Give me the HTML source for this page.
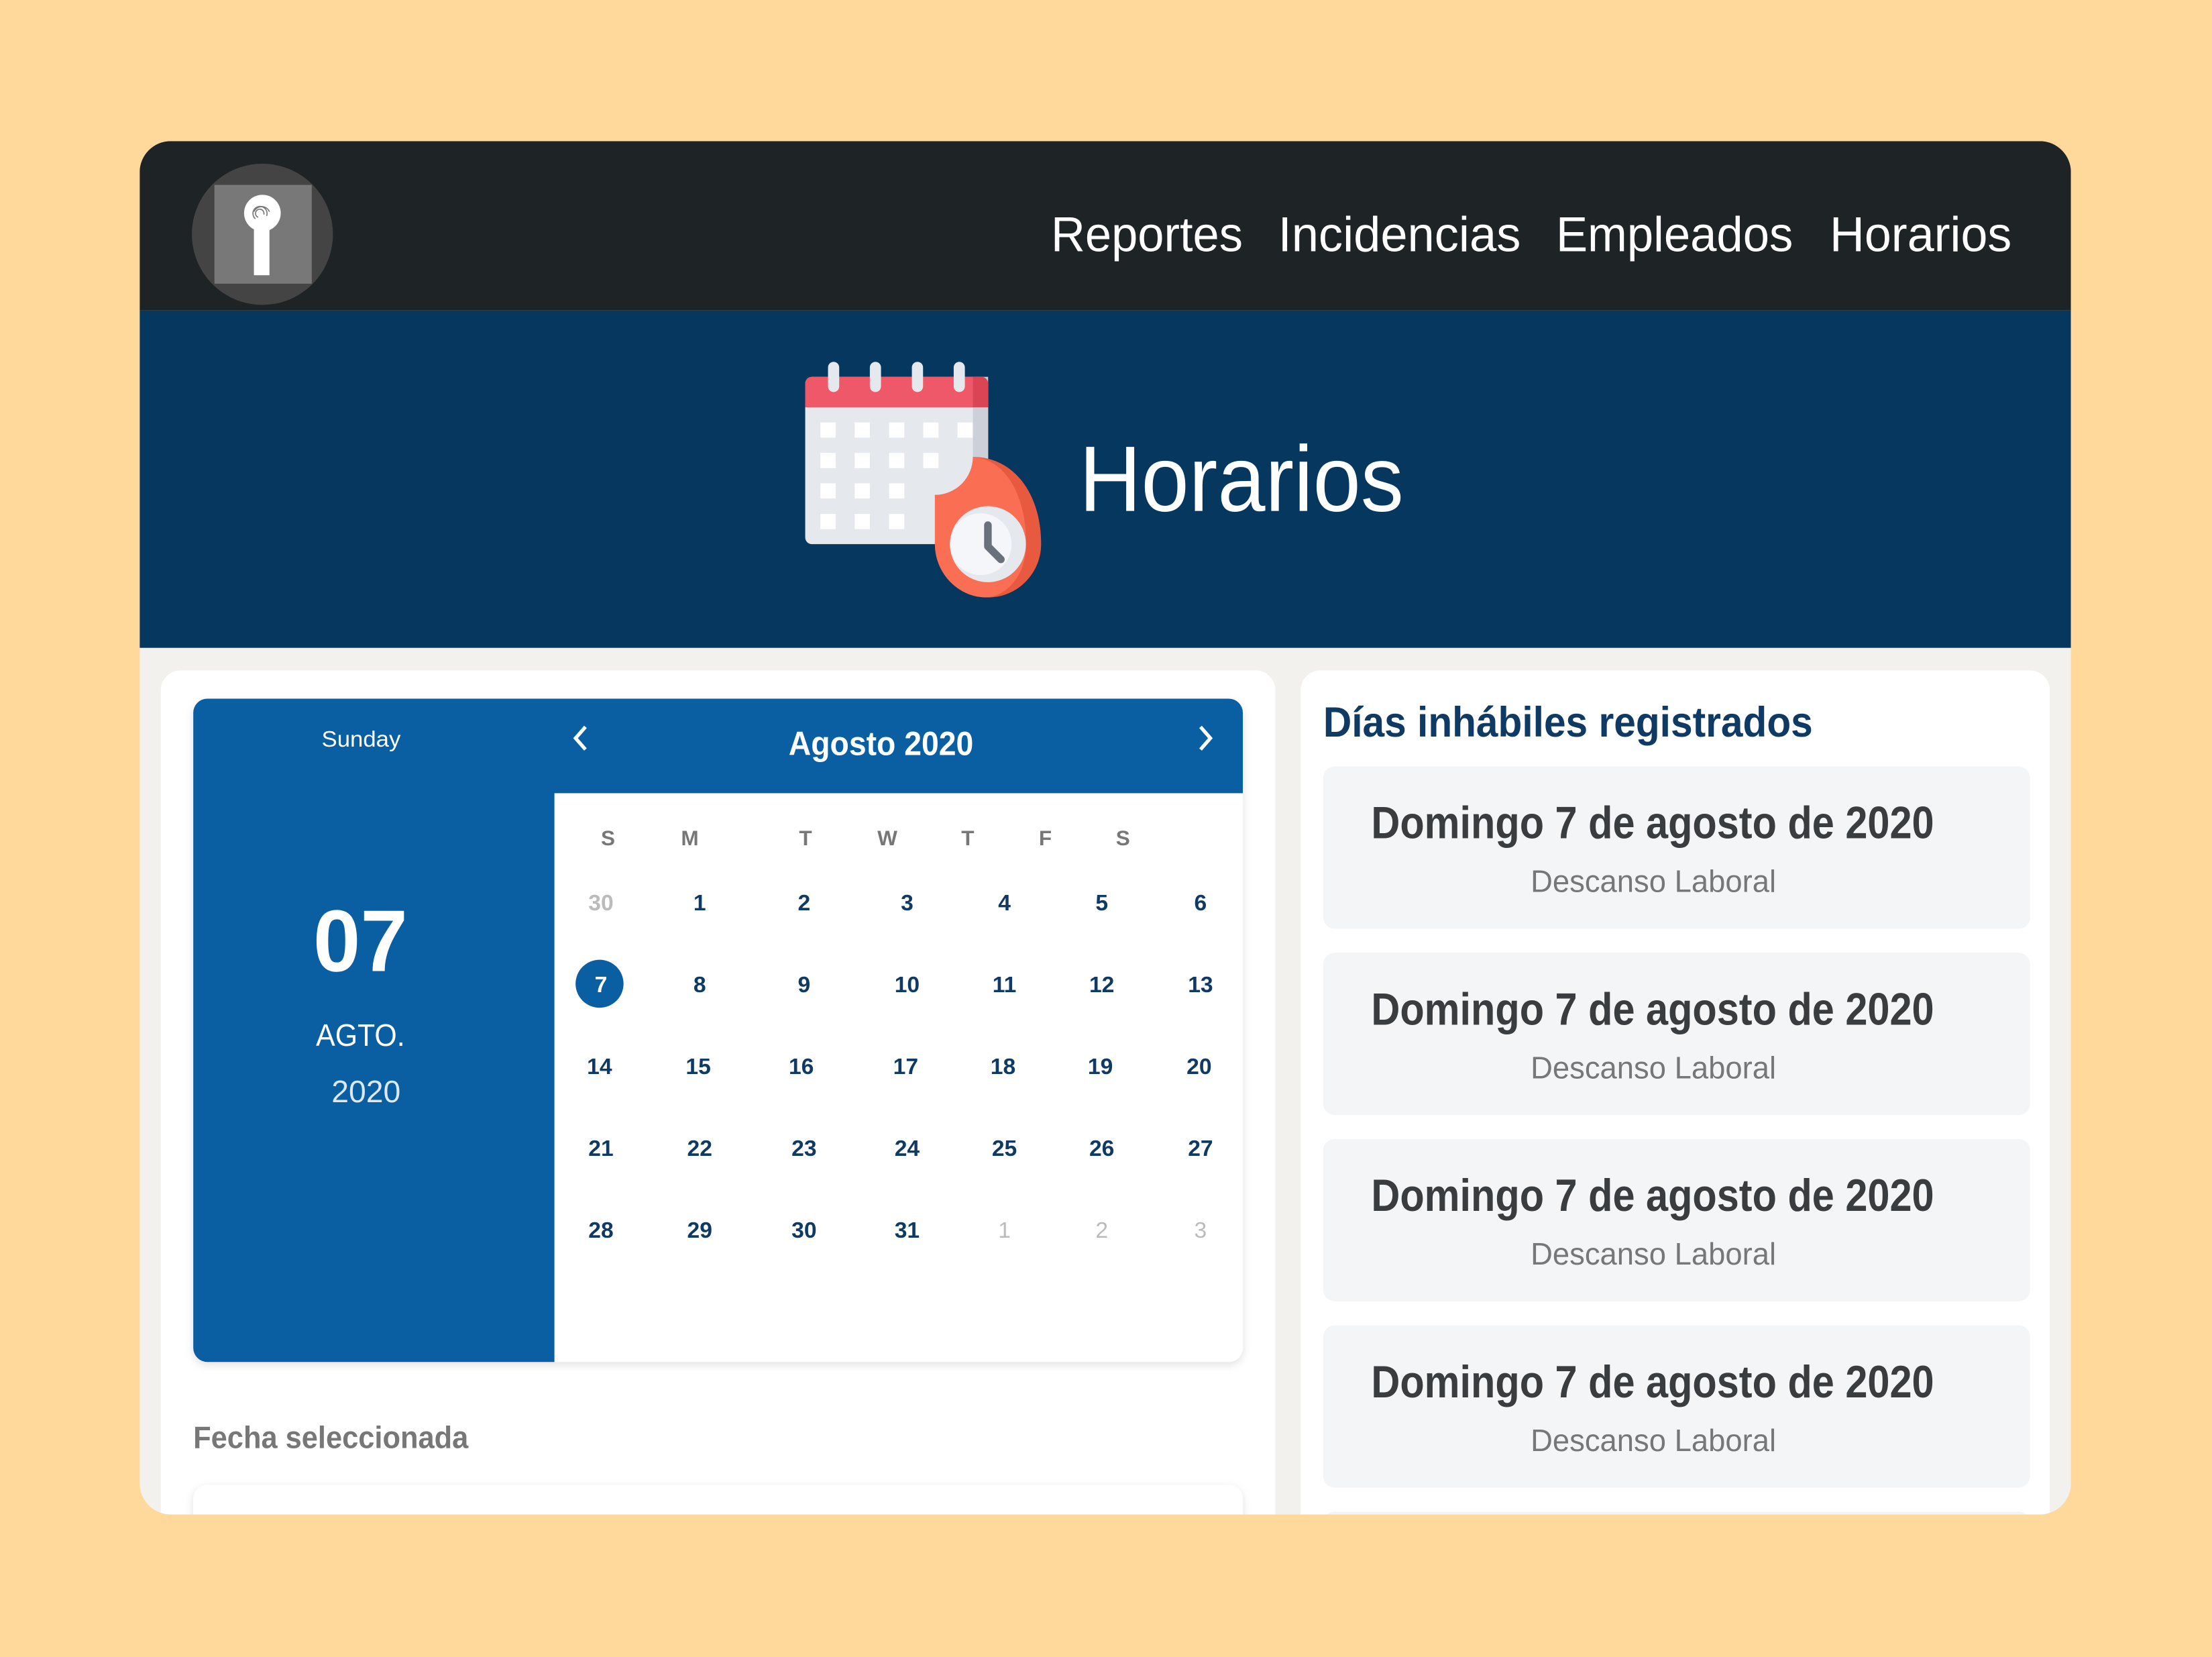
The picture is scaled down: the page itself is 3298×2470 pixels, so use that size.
<!DOCTYPE html>
<html><head><meta charset="utf-8"><style>
html,body{margin:0;padding:0;background:#ffd99b;}
svg{display:block;}
text{font-family:"Liberation Sans",sans-serif;}
</style></head><body>
<svg width="3298" height="2470" viewBox="0 0 1568 1174" preserveAspectRatio="none" xmlns="http://www.w3.org/2000/svg">
<defs>
<clipPath id="card"><rect x="99" y="100" width="1369" height="973" rx="22"/></clipPath>
<filter id="sh" x="-10%" y="-10%" width="120%" height="130%"><feDropShadow dx="0" dy="2" stdDeviation="3" flood-color="#000" flood-opacity="0.12"/></filter>
</defs>
<rect width="1568" height="1174" fill="#ffd99b"/>
<g clip-path="url(#card)">
<rect x="99" y="100" width="1369" height="973" fill="#f2f1ed"/>
<rect x="99" y="100" width="1369" height="120" fill="#1e2326"/>
<circle cx="186" cy="166" r="50" fill="#444"/>
<rect x="152" y="131" width="69" height="70" fill="#787878"/>
<circle cx="186" cy="151" r="13" fill="#fff"/>
<rect x="180" y="160" width="11" height="35" fill="#fff"/>
<g fill="none" stroke="#777" stroke-width="0.8">
<path d="M181 155 a5 5 0 1 1 8 -2"/><path d="M183 154 a3 3 0 1 1 4 -2"/><path d="M180 150 a6 6 0 0 1 11 0"/>
</g>
<text fill="#fff" font-size="35" x="745" y="178" textLength="136" lengthAdjust="spacingAndGlyphs">Reportes</text>
<text fill="#fff" font-size="35" x="906" y="178" textLength="172" lengthAdjust="spacingAndGlyphs">Incidencias</text>
<text fill="#fff" font-size="35" x="1103" y="178" textLength="168" lengthAdjust="spacingAndGlyphs">Empleados</text>
<text fill="#fff" font-size="35" x="1297" y="178" textLength="129" lengthAdjust="spacingAndGlyphs">Horarios</text>
<rect x="99" y="220" width="1369" height="239" fill="#06375f"/>
<svg x="547" y="238" width="214" height="200" viewBox="0 0 1350 1260">
<rect x="150" y="182" width="818" height="748" rx="30" fill="#e5e8ec"/>
<rect x="900" y="182" width="68" height="748" fill="#ccd0d8"/>
<path d="M150 318 V212 a30 30 0 0 1 30 -30 H938 a30 30 0 0 1 30 30 V318 Z" fill="#ee5868"/>
<path d="M900 182 H938 a30 30 0 0 1 30 30 V318 H900 Z" fill="#d94555"/>
<g fill="#e5e8ec"><rect x="252" y="115" width="50" height="135" rx="25"/><rect x="439" y="115" width="50" height="135" rx="25"/><rect x="627" y="115" width="50" height="135" rx="25"/><rect x="814" y="115" width="50" height="135" rx="25"/></g>
<g fill="#fff">
<rect x="218" y="386" width="68" height="68"/><rect x="371" y="386" width="68" height="68"/><rect x="525" y="386" width="68" height="68"/><rect x="678" y="386" width="68" height="68"/><rect x="831" y="386" width="68" height="68"/>
<rect x="218" y="522" width="68" height="68"/><rect x="371" y="522" width="68" height="68"/><rect x="525" y="522" width="68" height="68"/><rect x="678" y="522" width="68" height="68"/>
<rect x="218" y="658" width="68" height="68"/><rect x="371" y="658" width="68" height="68"/><rect x="525" y="658" width="68" height="68"/>
<rect x="218" y="795" width="68" height="68"/><rect x="371" y="795" width="68" height="68"/><rect x="525" y="795" width="68" height="68"/>
</g>
<path d="M900 540 C1080 540 1205 700 1205 930 C1205 1060 1100 1168 967 1168 C835 1168 730 1060 730 930 L730 710 A170 170 0 0 0 900 540 Z" fill="#e85a40"/>
<path d="M900 540 C1040 550 1138 700 1138 930 C1138 1060 1060 1160 960 1168 C835 1168 730 1060 730 930 L730 710 A170 170 0 0 0 900 540 Z" fill="#fa6e53"/>
<circle cx="967" cy="930" r="170" fill="#e5e8ec"/>
<circle cx="935" cy="930" r="138" fill="#f5f6fa"/>
<path d="M967 845 V940 L1025 998" fill="none" stroke="#6b717c" stroke-width="34" stroke-linecap="round" stroke-linejoin="round"/>
</svg>
<text fill="#fff" font-size="66" x="765" y="362" textLength="230" lengthAdjust="spacingAndGlyphs">Horarios</text>
<rect x="114" y="475" width="790" height="640" rx="14" fill="#fff"/>
<rect x="137" y="495" width="744" height="470" rx="10" fill="#fff" filter="url(#sh)"/>
<path d="M147 495 H871 a10 10 0 0 1 10 10 V562 H393 V965 H147 a10 10 0 0 1 -10 -10 V505 a10 10 0 0 1 10 -10 Z" fill="#0a5fa3"/>
<text fill="#fff" font-size="16" x="228" y="529" textLength="56" lengthAdjust="spacingAndGlyphs">Sunday</text>
<path d="M415 515 L408 523 L415 531" fill="none" stroke="#fff" stroke-width="2.5"/>
<path d="M851 515 L858 523 L851 531" fill="none" stroke="#fff" stroke-width="2.5"/>
<text fill="#fff" font-size="24" font-weight="bold" x="559" y="535" textLength="131" lengthAdjust="spacingAndGlyphs">Agosto 2020</text>
<text fill="#fff" font-size="62" font-weight="bold" x="222" y="688" textLength="67" lengthAdjust="spacingAndGlyphs">07</text>
<text fill="#fff" font-size="22" x="224" y="741" textLength="63" lengthAdjust="spacingAndGlyphs">AGTO.</text>
<text fill="#dde8f3" font-size="22" font-weight="300" x="235" y="781" textLength="49" lengthAdjust="spacingAndGlyphs">2020</text>
<g fill="#777" font-size="15" font-weight="bold" text-anchor="middle">
<text x="431" y="599">S</text><text x="489" y="599">M</text><text x="571" y="599">T</text><text x="629" y="599">W</text><text x="686" y="599">T</text><text x="741" y="599">F</text><text x="796" y="599">S</text>
</g>
<circle cx="425" cy="697" r="17" fill="#0a5fa3"/>
<g fill="#0e3a63" font-size="16" font-weight="bold" text-anchor="middle">
<text x="426" y="645" fill="#bbb">30</text><text x="496" y="645">1</text><text x="570" y="645">2</text><text x="643" y="645">3</text><text x="712" y="645">4</text><text x="781" y="645">5</text><text x="851" y="645">6</text>
<text x="426" y="703" fill="#fff">7</text><text x="496" y="703">8</text><text x="570" y="703">9</text><text x="643" y="703">10</text><text x="712" y="703">11</text><text x="781" y="703">12</text><text x="851" y="703">13</text>
<text x="425" y="761">14</text><text x="495" y="761">15</text><text x="568" y="761">16</text><text x="642" y="761">17</text><text x="711" y="761">18</text><text x="780" y="761">19</text><text x="850" y="761">20</text>
<text x="426" y="819">21</text><text x="496" y="819">22</text><text x="570" y="819">23</text><text x="643" y="819">24</text><text x="712" y="819">25</text><text x="781" y="819">26</text><text x="851" y="819">27</text>
<text x="426" y="877">28</text><text x="496" y="877">29</text><text x="570" y="877">30</text><text x="643" y="877">31</text><text x="712" y="877" fill="#bbb" font-weight="normal">1</text><text x="781" y="877" fill="#bbb" font-weight="normal">2</text><text x="851" y="877" fill="#bbb" font-weight="normal">3</text>
</g>
<text fill="#777" font-size="22" font-weight="bold" x="137" y="1026" textLength="195" lengthAdjust="spacingAndGlyphs">Fecha seleccionada</text>
<rect x="137" y="1052" width="744" height="80" rx="10" fill="#fff" filter="url(#sh)"/>
<rect x="922" y="475" width="531" height="640" rx="14" fill="#fff"/>
<text fill="#0e3a63" font-size="30" font-weight="bold" x="938" y="522" textLength="347" lengthAdjust="spacingAndGlyphs">Días inhábiles registrados</text>
<g>
<rect x="938" y="543" width="501" height="115" rx="8" fill="#f4f5f7"/>
<text fill="#3a3d40" font-size="32" font-weight="bold" x="972" y="594" textLength="399" lengthAdjust="spacingAndGlyphs">Domingo 7 de agosto de 2020</text>
<text fill="#777" font-size="22" x="1085" y="632" textLength="174" lengthAdjust="spacingAndGlyphs">Descanso Laboral</text>
<rect x="938" y="675" width="501" height="115" rx="8" fill="#f4f5f7"/>
<text fill="#3a3d40" font-size="32" font-weight="bold" x="972" y="726" textLength="399" lengthAdjust="spacingAndGlyphs">Domingo 7 de agosto de 2020</text>
<text fill="#777" font-size="22" x="1085" y="764" textLength="174" lengthAdjust="spacingAndGlyphs">Descanso Laboral</text>
<rect x="938" y="807" width="501" height="115" rx="8" fill="#f4f5f7"/>
<text fill="#3a3d40" font-size="32" font-weight="bold" x="972" y="858" textLength="399" lengthAdjust="spacingAndGlyphs">Domingo 7 de agosto de 2020</text>
<text fill="#777" font-size="22" x="1085" y="896" textLength="174" lengthAdjust="spacingAndGlyphs">Descanso Laboral</text>
<rect x="938" y="939" width="501" height="115" rx="8" fill="#f4f5f7"/>
<text fill="#3a3d40" font-size="32" font-weight="bold" x="972" y="990" textLength="399" lengthAdjust="spacingAndGlyphs">Domingo 7 de agosto de 2020</text>
<text fill="#777" font-size="22" x="1085" y="1028" textLength="174" lengthAdjust="spacingAndGlyphs">Descanso Laboral</text>
<rect x="938" y="1071" width="501" height="115" rx="8" fill="#f4f5f7"/>
</g>
</g>
</svg>
</body></html>
